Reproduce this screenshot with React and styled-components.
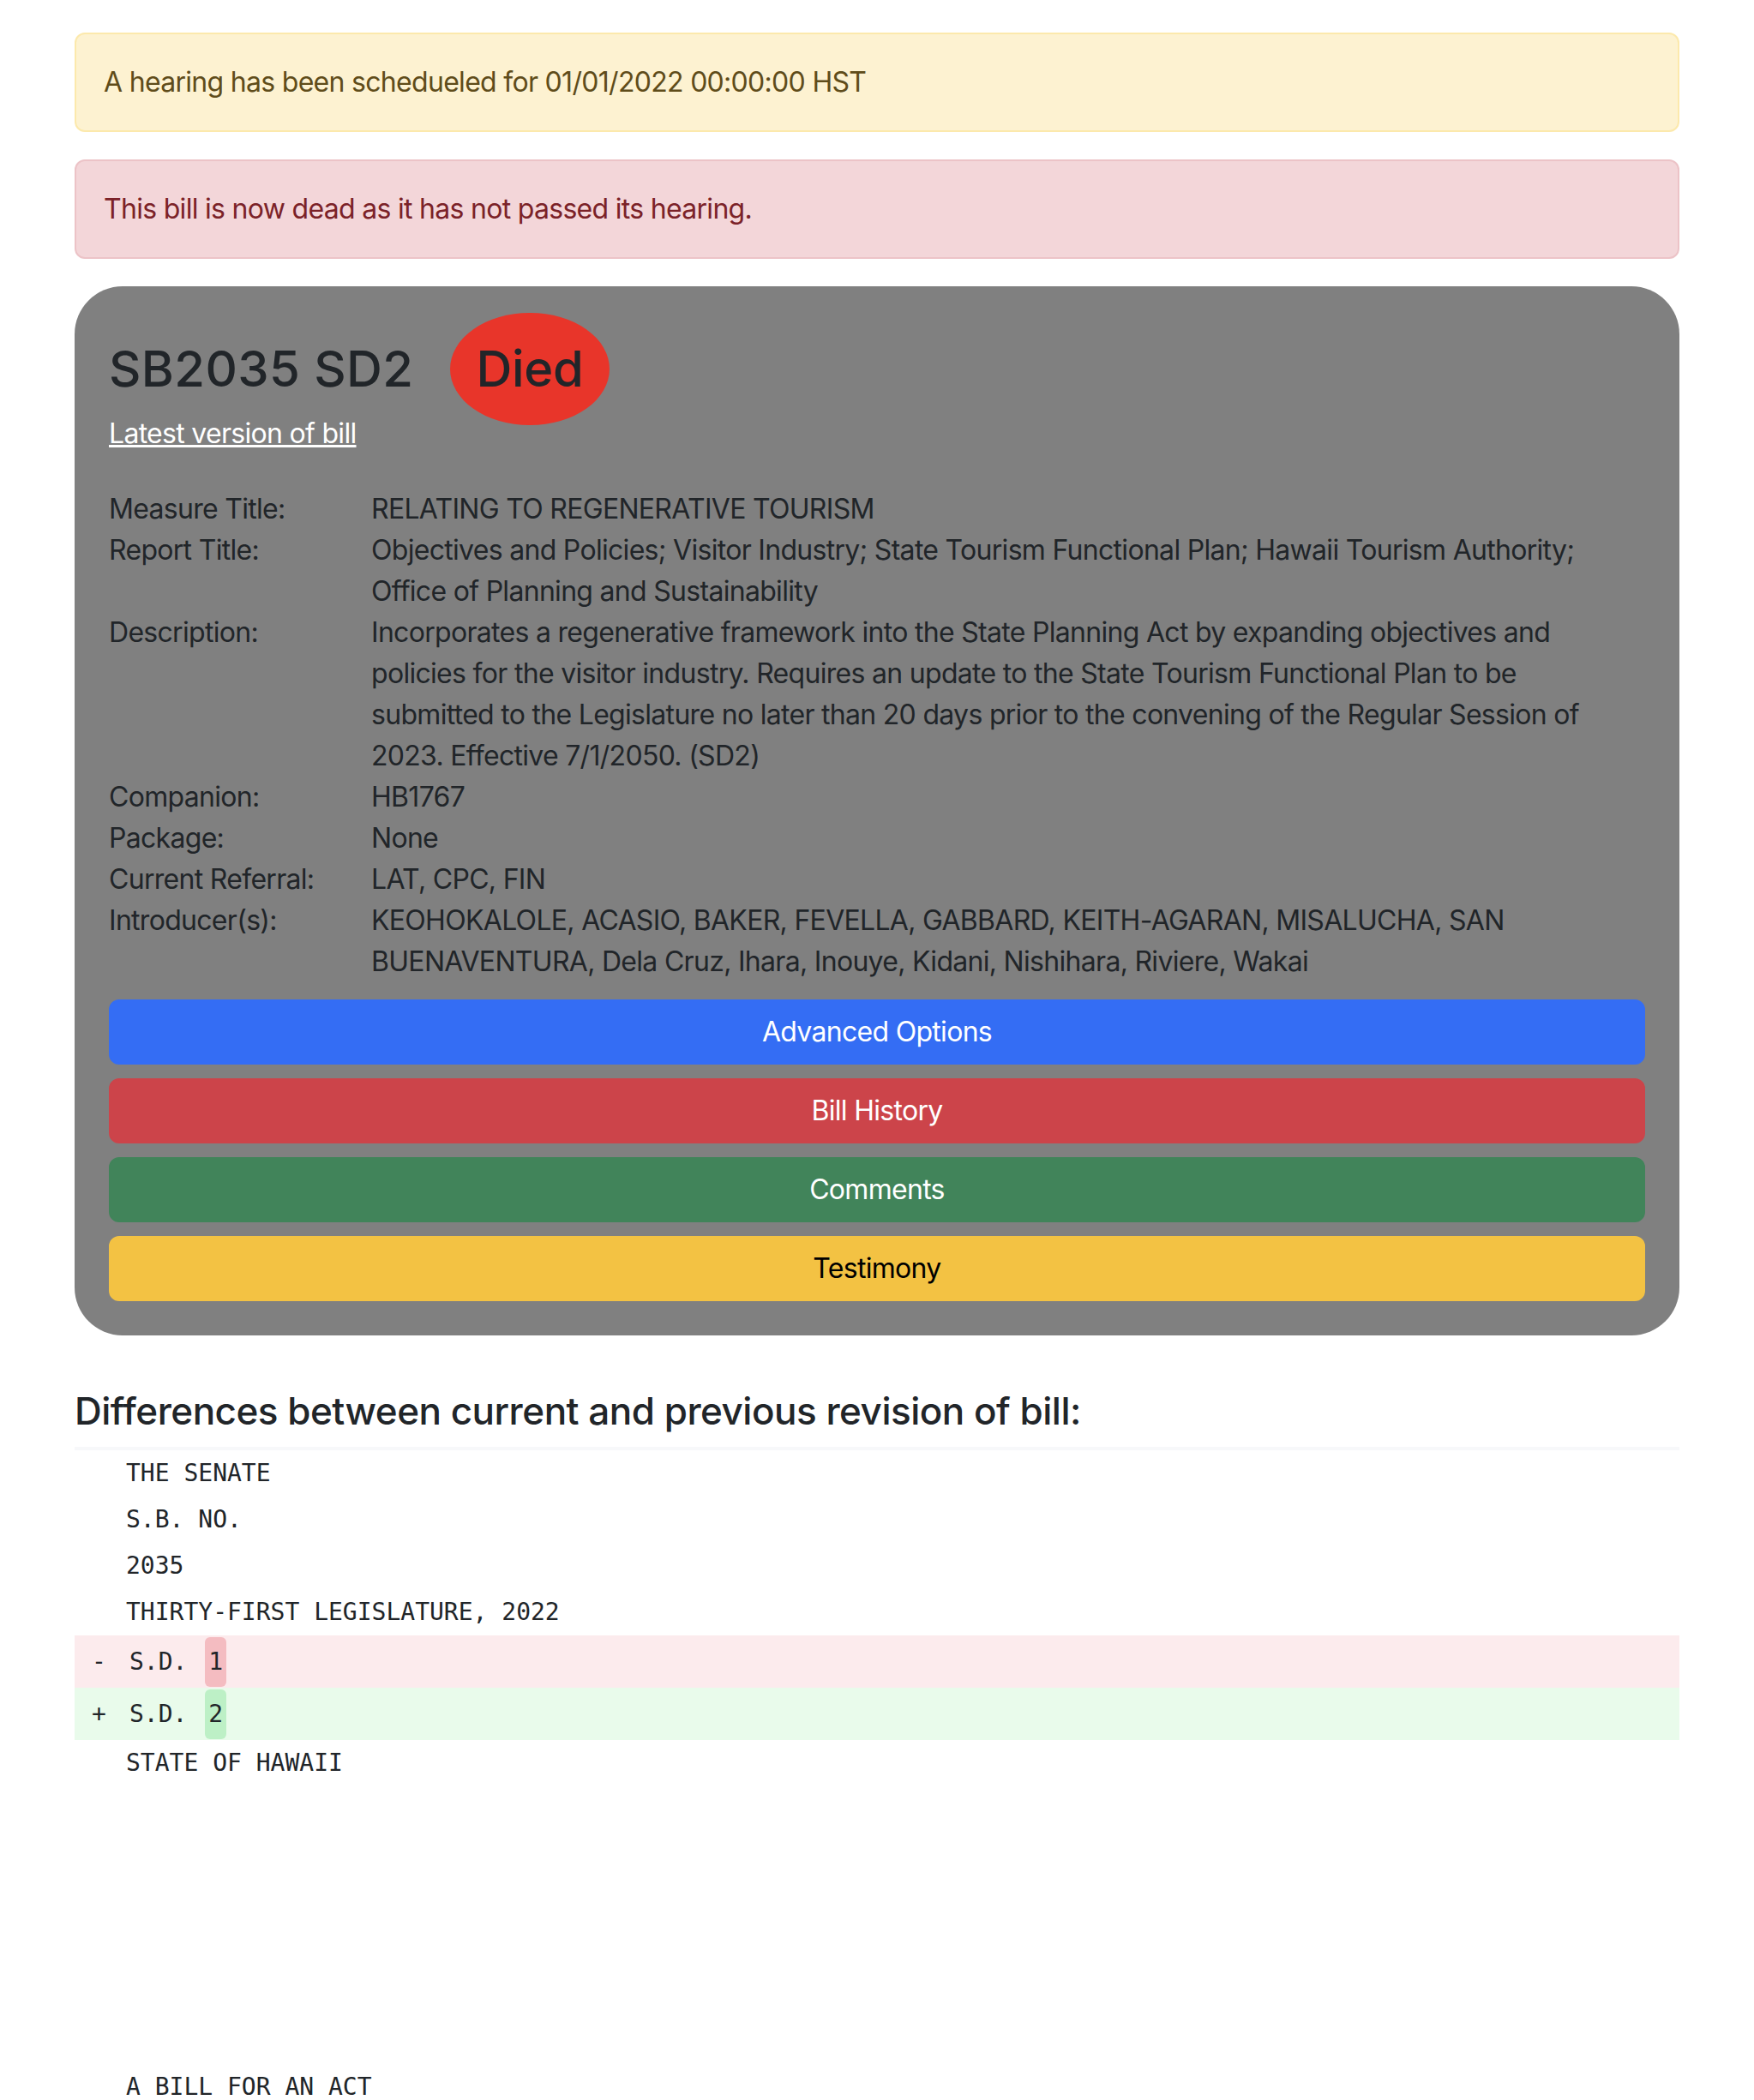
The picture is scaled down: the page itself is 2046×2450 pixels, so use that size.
import React from "react";
import styled, { createGlobalStyle } from "styled-components";

const GlobalStyle = createGlobalStyle`
	body {
		margin: 0;
		background: #fff;
		color: #212529;
		font-family: Inter, "Liberation Sans", Arial, sans-serif;
		font-size: 32px;
		line-height: 1.5;
		letter-spacing: -0.7px;
	}
`;

const Page = styled.div`
	width: 1872px;
	margin: 0 auto;
	padding-top: 38px;
`;

const Alert = styled.div`
	padding: 32px;
	margin-bottom: 32px;
	border: 2px solid ${props => (props.kind === "danger" ? "#ecc3c7" : "#fce9ac")};
	border-radius: 12px;
	background: ${props => (props.kind === "danger" ? "#f3d6d9" : "#fdf2d1")};
	color: ${props => (props.kind === "danger" ? "#7b2228" : "#5f4c1a")};
`;

const Card = styled.div`
	background: #808080;
	border-radius: 56px;
	padding: 60px 40px 40px;
`;

const TitleRow = styled.h2`
	display: flex;
	align-items: center;
	height: 73px;
	margin: 0 0 15px;
	font-size: 58px;
	font-weight: 500;
	line-height: 73px;
	letter-spacing: 0.4px;
`;

const Badge = styled.span`
	margin-left: 43px;
	padding: 29px 30px;
	border-radius: 50%;
	background: #e8352a;
	letter-spacing: -0.3px;
`;

const VersionLink = styled.a`
	display: inline-block;
	color: #fff;
	text-decoration: underline;
	margin-bottom: 40px;
`;

const InfoGrid = styled.div`
	display: grid;
	grid-template-columns: 306px 1fr;
`;

const Buttons = styled.div`
	display: flex;
	flex-direction: column;
	gap: 16px;
	margin-top: 20px;
`;

const Button = styled.button`
	height: 76px;
	border: 2px solid ${props => props.bg};
	border-radius: 12px;
	background: ${props => props.bg};
	color: ${props => props.fg || "#fff"};
	font-family: inherit;
	font-size: 32px;
	letter-spacing: inherit;
	line-height: 48px;
	padding: 12px 24px;
	cursor: pointer;
`;

const DiffHeading = styled.h4`
	margin: 60px 0 14px;
	font-size: 44px;
	font-weight: 500;
	line-height: 56px;
	letter-spacing: -0.5px;
`;

const DiffTable = styled.div`
	border-top: 4px solid #f7f8fa;
	font-family: "DejaVu Sans Mono", "Liberation Mono", monospace;
	font-size: 28px;
	letter-spacing: 0;
`;

const DiffLine = styled.div`
	display: flex;
	align-items: center;
	height: ${props => (props.kind ? "61px" : "54px")};
	background: ${props =>
		props.kind === "removed" ? "#fcebed" : props.kind === "added" ? "#e9fbeb" : "transparent"};
	white-space: pre;
`;

const Marker = styled.span`
	width: 17px;
	padding: 0 23px 0 20px;
	flex: none;
`;

const Word = styled.span`
	display: inline-flex;
	padding: 4px;
	line-height: 50px;
	border-radius: 6px;
	background: ${props =>
		props.hl === "removed" ? "#f4bcc1" : props.hl === "added" ? "#bdf0c6" : "transparent"};
`;

const info = [
	["Measure Title:", "RELATING TO REGENERATIVE TOURISM"],
	[
		"Report Title:",
		"Objectives and Policies; Visitor Industry; State Tourism Functional Plan; Hawaii Tourism Authority; Office of Planning and Sustainability",
	],
	[
		"Description:",
		"Incorporates a regenerative framework into the State Planning Act by expanding objectives and policies for the visitor industry. Requires an update to the State Tourism Functional Plan to be submitted to the Legislature no later than 20 days prior to the convening of the Regular Session of 2023. Effective 7/1/2050. (SD2)",
	],
	["Companion:", "HB1767"],
	["Package:", "None"],
	["Current Referral:", "LAT, CPC, FIN"],
	[
		"Introducer(s):",
		"KEOHOKALOLE, ACASIO, BAKER, FEVELLA, GABBARD, KEITH-AGARAN, MISALUCHA, SAN BUENAVENTURA, Dela Cruz, Ihara, Inouye, Kidani, Nishihara, Riviere, Wakai",
	],
];

const before = ["THE SENATE", "S.B. NO.", "2035", "THIRTY-FIRST LEGISLATURE, 2022"];
const after = ["STATE OF HAWAII", "", "", "", "", "", "", "A BILL FOR AN ACT", "", ""];

export default function App() {
	return (
		<Page>
			<GlobalStyle />
			<Alert>A hearing has been schedueled for 01/01/2022 00:00:00 HST</Alert>
			<Alert kind="danger">This bill is now dead as it has not passed its hearing.</Alert>

			<Card>
				<TitleRow>
					SB2035 SD2
					<Badge>Died</Badge>
				</TitleRow>
				<VersionLink href="#">Latest version of bill</VersionLink>
				<InfoGrid>
					{info.map(([label, value]) => (
						<React.Fragment key={label}>
							<div>{label}</div>
							<div>{value}</div>
						</React.Fragment>
					))}
				</InfoGrid>
				<Buttons>
					<Button bg="#346df4">Advanced Options</Button>
					<Button bg="#cc444a">Bill History</Button>
					<Button bg="#41845a">Comments</Button>
					<Button bg="#f3c243" fg="#000">Testimony</Button>
				</Buttons>
			</Card>

			<DiffHeading>Differences between current and previous revision of bill:</DiffHeading>
			<DiffTable>
				{before.map((line, i) => (
					<DiffLine key={"b" + i}>
						<Marker> </Marker>
						{line}
					</DiffLine>
				))}
				<DiffLine kind="removed">
					<Marker>-</Marker>
					<Word>S.D. </Word>
					<Word hl="removed">1</Word>
				</DiffLine>
				<DiffLine kind="added">
					<Marker>+</Marker>
					<Word>S.D. </Word>
					<Word hl="added">2</Word>
				</DiffLine>
				{after.map((line, i) => (
					<DiffLine key={"a" + i}>
						<Marker> </Marker>
						{line}
					</DiffLine>
				))}
			</DiffTable>
		</Page>
	);
}
